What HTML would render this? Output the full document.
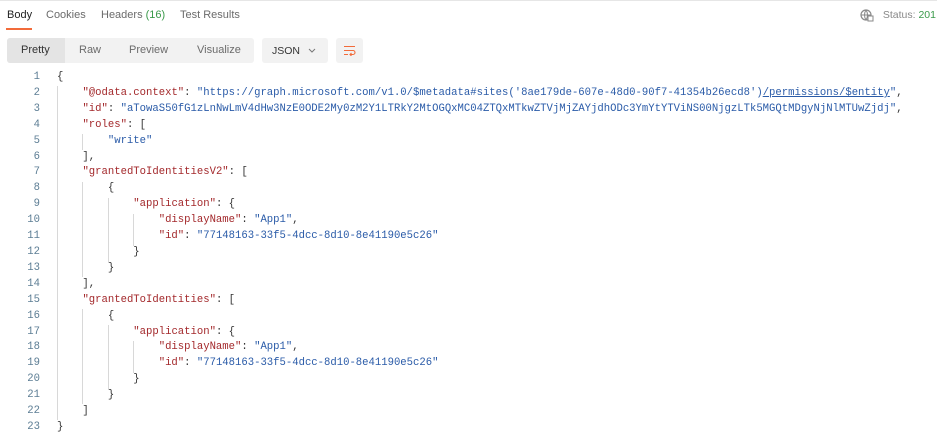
<!DOCTYPE html>
<html><head><style>
body{margin:0;width:937px;height:443px;background:#fff;overflow:hidden;position:relative;font-family:"Liberation Sans",sans-serif;}
.top{position:absolute;left:0;top:0;width:937px;height:1px;background:#e6e6e6}
.tab{position:absolute;top:9px;font-size:11px;color:#6b6b6b;white-space:nowrap}
.ul{position:absolute;left:6px;top:28px;width:26px;height:2px;background:#f26b3a}
.seg{position:absolute;left:7px;top:38px;width:247px;height:25px;background:#f2f2f2;border-radius:3px}
.sel{position:absolute;left:7px;top:38px;width:58px;height:25px;background:#e4e4e4;border-radius:3px 0 0 3px}
.sl{position:absolute;top:44px;font-size:11px;color:#6b6b6b}
.json{position:absolute;left:262px;top:38px;width:66px;height:25px;background:#f2f2f2;border-radius:3px}
.wrap{position:absolute;left:336px;top:38px;width:27px;height:25px;background:#f2f2f2;border-radius:3px}
.code{position:absolute;left:0;top:70px;width:937px;font-family:"Liberation Mono",monospace;font-size:10.6px;line-height:15.9px;white-space:pre}
.ln{position:absolute;left:0;top:0;width:40px;text-align:right;color:#5c7d94}
.c{position:absolute;left:57px;top:0;color:#333}
.k{color:#a3282b}.s{color:#2a5ba8}
.g{position:absolute;width:1px;background:#d8d8d8}
</style></head><body>
<div class="top"></div>
<div class="tab" style="left:7px;color:#222">Body</div>
<div class="tab" style="left:46px">Cookies</div>
<div class="tab" style="left:101px">Headers <span style="color:#3a9a4a">(16)</span></div>
<div class="tab" style="left:180px">Test Results</div>
<div class="ul"></div>
<svg style="position:absolute;left:860px;top:9px" width="14" height="13" viewBox="0 0 14 13"><circle cx="6" cy="6" r="5" fill="none" stroke="#888" stroke-width="1.2"/><path d="M1 6h10M6 1c-2 3-2 7 0 10M6 1c2 3 2 7 0 10" fill="none" stroke="#888"/><rect x="8" y="7" width="5" height="5" fill="#fff" stroke="#888"/></svg>
<div class="tab" style="left:auto;right:1px;color:#888;font-size:10.5px">Status: <span style="color:#3a9a4a">201</span></div>
<div class="seg"></div><div class="sel"></div>
<div class="sl" style="left:21px;color:#333">Pretty</div>
<div class="sl" style="left:79px">Raw</div>
<div class="sl" style="left:129px">Preview</div>
<div class="sl" style="left:197px">Visualize</div>
<div class="json"></div>
<div class="sl" style="left:272px;color:#333;font-size:10.5px;top:45px">JSON</div>
<svg style="position:absolute;left:308px;top:48px" width="8" height="5"><path d="M1 1l3 3 3-3" fill="none" stroke="#777"/></svg>
<div class="wrap"></div>
<svg style="position:absolute;left:343px;top:45px" width="13" height="11"><path d="M1 1.5h11M1 5.5h9a2 2 0 0 1 0 4h-3M8.5 8l-1.5 1.5 1.5 1.5M1 9.5h4" fill="none" stroke="#f26b3a" stroke-width="1.1"/></svg>

<div class="g" style="left:57px;top:86px;height:334px"></div>
<div class="g" style="left:82px;top:134px;height:16px"></div>
<div class="g" style="left:82px;top:182px;height:95px"></div>
<div class="g" style="left:108px;top:198px;height:64px"></div>
<div class="g" style="left:133px;top:214px;height:32px"></div>
<div class="g" style="left:82px;top:309px;height:95px"></div>
<div class="g" style="left:108px;top:325px;height:64px"></div>
<div class="g" style="left:133px;top:341px;height:32px"></div>

<div class="code"><div class="ln">1
2
3
4
5
6
7
8
9
10
11
12
13
14
15
16
17
18
19
20
21
22
23</div><div class="c">{
    <span class="k">"@odata.context"</span>: <span class="s">"https://graph.microsoft.com/v1.0/$metadata#sites('8ae179de-607e-48d0-90f7-41354b26ecd8')<u>/permissions/$entity</u>"</span>,
    <span class="k">"id"</span>: <span class="s">"aTowaS50fG1zLnNwLmV4dHw3NzE0ODE2My0zM2Y1LTRkY2MtOGQxMC04ZTQxMTkwZTVjMjZAYjdhODc3YmYtYTViNS00NjgzLTk5MGQtMDgyNjNlMTUwZjdj"</span>,
    <span class="k">"roles"</span>: [
        <span class="s">"write"</span>
    ],
    <span class="k">"grantedToIdentitiesV2"</span>: [
        {
            <span class="k">"application"</span>: {
                <span class="k">"displayName"</span>: <span class="s">"App1"</span>,
                <span class="k">"id"</span>: <span class="s">"77148163-33f5-4dcc-8d10-8e41190e5c26"</span>
            }
        }
    ],
    <span class="k">"grantedToIdentities"</span>: [
        {
            <span class="k">"application"</span>: {
                <span class="k">"displayName"</span>: <span class="s">"App1"</span>,
                <span class="k">"id"</span>: <span class="s">"77148163-33f5-4dcc-8d10-8e41190e5c26"</span>
            }
        }
    ]
}</div></div>
</body></html>
